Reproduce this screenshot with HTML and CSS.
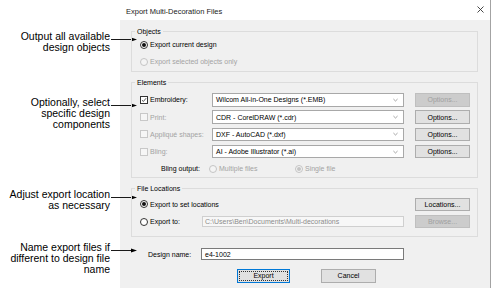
FILE: index.html
```html
<!DOCTYPE html>
<html lang="en">
<head>
    <meta charset="UTF-8">
    <title>Export Multi-Decoration Files</title>
    <link rel="stylesheet" href="styles.css">
</head>
<body>
    <div class="page">
        <div class="notes">
            <div class="note n1">Output all available<br>design objects
                <svg class="arrow" viewBox="0 0 26 5"><line x1="0" y1="2.5" x2="22" y2="2.5"/><polygon points="20,0.6 26,2.5 20,4.4"/></svg>
            </div>
            <div class="note n2">Optionally, select<br>specific design<br>components
                <svg class="arrow" viewBox="0 0 26 5"><line x1="0" y1="2.5" x2="22" y2="2.5"/><polygon points="20,0.6 26,2.5 20,4.4"/></svg>
            </div>
            <div class="note n3">Adjust export location<br>as necessary
                <svg class="arrow" viewBox="0 0 26 5"><line x1="0" y1="2.5" x2="22" y2="2.5"/><polygon points="20,0.6 26,2.5 20,4.4"/></svg>
            </div>
            <div class="note n4">Name export files if<br>different to design file<br>name
                <svg class="arrow" viewBox="0 0 26 5"><line x1="0" y1="2.5" x2="22" y2="2.5"/><polygon points="20,0.6 26,2.5 20,4.4"/></svg>
            </div>
        </div>

        <div class="dialog">
            <div class="titlebar">
                <span>Export Multi-Decoration Files</span>
                <svg class="close" viewBox="0 0 7 7"><path d="M0.5 0.5 L6.5 6.5 M6.5 0.5 L0.5 6.5"/></svg>
            </div>
            <div class="body">
                <div class="group objects">
                    <span class="legend">Objects</span>
                    <div class="opt"><span class="radio on"></span>Export current design</div>
                    <div class="opt off"><span class="radio"></span>Export selected objects only</div>
                </div>

                <div class="group elements">
                    <span class="legend">Elements</span>
                    <div class="grid">
                        <div class="opt"><span class="check on"><svg viewBox="0 0 8 8"><path d="M1.3 4.2 L3.2 6 L6.8 1.6"/></svg></span>Embroidery:</div>
                        <div class="combo"><span>Wilcom All-in-One Designs (*.EMB)</span><svg viewBox="0 0 6 4"><path d="M0.5 0.8 L3 3.2 L5.5 0.8"/></svg></div>
                        <div class="btn disabled">Options...</div>

                        <div class="opt off"><span class="check"></span>Print:</div>
                        <div class="combo"><span>CDR - CorelDRAW (*.cdr)</span><svg viewBox="0 0 6 4"><path d="M0.5 0.8 L3 3.2 L5.5 0.8"/></svg></div>
                        <div class="btn">Options...</div>

                        <div class="opt off"><span class="check"></span>Appliqué shapes:</div>
                        <div class="combo"><span>DXF - AutoCAD (*.dxf)</span><svg viewBox="0 0 6 4"><path d="M0.5 0.8 L3 3.2 L5.5 0.8"/></svg></div>
                        <div class="btn">Options...</div>

                        <div class="opt off"><span class="check"></span>Bling:</div>
                        <div class="combo"><span>AI - Adobe Illustrator (*.ai)</span><svg viewBox="0 0 6 4"><path d="M0.5 0.8 L3 3.2 L5.5 0.8"/></svg></div>
                        <div class="btn">Options...</div>
                    </div>
                    <div class="bling">
                        <span class="bling-label">Bling output:</span>
                        <div class="opt off multi"><span class="radio"></span>Multiple files</div>
                        <div class="opt off single"><span class="radio on"></span>Single file</div>
                    </div>
                </div>

                <div class="group locations">
                    <span class="legend">File Locations</span>
                    <div class="grid">
                        <div class="opt wide"><span class="radio on"></span>Export to set locations</div>
                        <div class="btn">Locations...</div>

                        <div class="opt"><span class="radio"></span>Export to:</div>
                        <div class="path">C:\Users\Ben\Documents\Multi-decorations</div>
                        <div class="btn disabled">Browse...</div>
                    </div>
                </div>

                <div class="design-row">
                    <span class="design-label">Design name:</span>
                    <div class="textbox">e4-1002</div>
                </div>

                <div class="actions">
                    <div class="btn default">Export</div>
                    <div class="btn">Cancel</div>
                </div>
            </div>
        </div>
    </div>
</body>
</html>
```

FILE: styles.css
```css
body { margin: 0; background: #fff; font-family: "Liberation Sans", Arial, sans-serif; color: #000; }
.page { display: flex; width: 494px; height: 303px; }

/* callouts on the left */
.notes { width: 120px; flex: none; }
.note { position: relative; width: 110px; text-align: right; font-size: 10.5px; line-height: 11px; }
.note .arrow { position: absolute; left: 111px; top: 6px; width: 26px; height: 5px; }
.note .arrow line { stroke: #000; stroke-width: 0.9; }
.note .arrow polygon { fill: #000; }
.n1 { margin-top: 31px; }
.n2 { margin-top: 44px; }
.n3 { margin-top: 59px; }
.n4 { margin-top: 31px; }

/* dialog */
.dialog { width: 370px; height: 288px; flex: none; border-right: 1px solid #a3a3a3; }
.titlebar { height: 20px; box-sizing: border-box; padding: 3px 6px 0 6px; display: flex; align-items: center; justify-content: space-between; font-size: 7.5px; color: #222; }
.close { width: 7px; height: 7px; margin-top: -4px; }
.close path { stroke: #333; stroke-width: 0.9; fill: none; }
.body { background: #f0f0f0; height: 268px; box-sizing: border-box; padding: 11px 12px 0 11px; font-size: 7px; }

.group { position: relative; border: 1px solid #dcdcdc; box-sizing: border-box; padding-left: 8px; }
.legend { position: absolute; top: -5px; left: 3px; padding: 0 2px; line-height: 9px; background: #f0f0f0; }
.objects { height: 41px; padding-top: 4px; }
.objects .opt { height: 17px; }
.elements { height: 96px; margin-top: 10px; padding-top: 10px; }
.locations { height: 49px; margin-top: 10px; padding-top: 8.5px; }

.opt { display: flex; align-items: center; gap: 2px; white-space: nowrap; }
.off { color: #a3a3a3; }

.radio { width: 8px; height: 8px; box-sizing: border-box; border: 1px solid #333; border-radius: 50%; background: #fff; display: flex; align-items: center; justify-content: center; flex: none; }
.radio.on::after { content: ""; width: 4px; height: 4px; border-radius: 50%; background: #111; }
.off .radio { border-color: #c4c4c4; background: #f4f4f4; }
.off .radio.on::after { background: #c4c4c4; }

.check { width: 8px; height: 8px; box-sizing: border-box; border: 1px solid #333; background: #fff; flex: none; display: flex; }
.check svg { width: 100%; height: 100%; }
.check path { stroke: #222; stroke-width: 1; fill: none; }
.off .check { border-color: #c8c8c8; background: #f6f6f6; }

.grid { display: grid; grid-auto-rows: 13.5px; row-gap: 3.8px; align-items: center; }
.elements .grid { grid-template-columns: 72px 192px 66px; }
.locations .grid { grid-template-columns: 62px 202px 66px; }
.wide { grid-column: span 2; }

.combo { height: 13.5px; box-sizing: border-box; border: 1px solid #a8a8a8; background: #fff; display: flex; align-items: center; justify-content: space-between; padding: 0 5px 0 3px; }
.combo svg { width: 5px; height: 4px; }
.combo path { stroke: #777; stroke-width: 0.8; fill: none; }

.btn { height: 13.5px; box-sizing: border-box; border: 1px solid #adadad; background: #e1e1e1; display: flex; align-items: center; justify-content: center; }
.grid .btn { width: 55px; justify-self: end; }
.btn.disabled { background: #cccccc; border-color: #bfbfbf; color: #a0a0a0; }

.bling { display: flex; align-items: center; height: 12px; margin-top: 4.5px; }
.bling-label { width: 66px; text-align: right; padding-right: 6px; box-sizing: border-box; }
.multi { padding-left: 3px; width: 86px; }

.path { height: 11px; box-sizing: border-box; border: 1px solid #cfcfcf; background: #f7f7f7; color: #8c8c8c; padding-left: 2px; display: flex; align-items: center; white-space: nowrap; overflow: hidden; }

.design-row { display: flex; align-items: center; margin-top: 11px; padding-left: 17px; }
.design-label { width: 53px; }
.textbox { width: 203px; height: 12px; box-sizing: border-box; border: 1px solid #7a7a7a; background: #fff; padding-left: 3px; display: flex; align-items: center; }

.actions { display: flex; gap: 31px; margin-top: 9px; padding-left: 106px; }
.actions .btn { width: 55px; }
.actions .btn.default { width: 53px; border-color: #0078d7; outline: 1px dotted #333; outline-offset: -3px; }
```
